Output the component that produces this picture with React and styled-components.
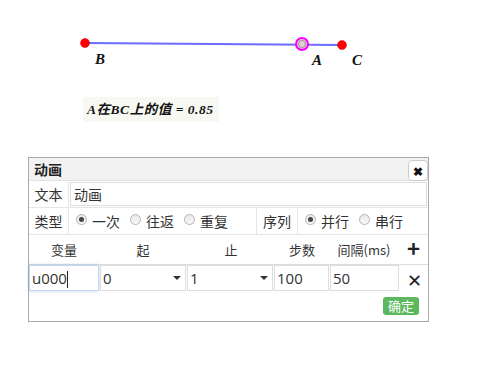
import React from "react";
import styled, { createGlobalStyle } from "styled-components";

const Global = createGlobalStyle`
  html, body { margin: 0; padding: 0; background: #fff; }
  body { font-family: "Noto Sans CJK SC", "Noto Sans", sans-serif; color: #333; }
`;

const Page = styled.div`
  width: 500px;
  height: 365px;
  overflow: hidden;
`;

const Canvas = styled.div`
  position: relative;
  height: 157px;
`;

const Drawing = styled.svg`
  display: block;
`;

const Dialog = styled.div`
  margin-left: 28px;
  width: 401px;
  height: 165px;
  box-sizing: border-box;
  border: 1px solid #aaa;
  display: flex;
  flex-direction: column;
`;

const Header = styled.div`
  height: 22px;
  background: #f2f2f2;
  border-bottom: 1px solid #e2e2e2;
  display: flex;
  align-items: center;
  justify-content: space-between;
  padding-left: 5px;
  font-size: 14px;
  font-weight: bold;
  color: #222;
`;

const CloseBtn = styled.div`
  width: 18px;
  height: 19px;
  margin-top: 3px;
  background: #fff;
  border: 1px solid #ccc;
  border-radius: 4px;
  display: flex;
  align-items: center;
  justify-content: center;
  font-size: 12px;
  color: #111;
`;

const Row = styled.div`
  display: flex;
  height: 26px;
  border-bottom: 1px solid #e6e6e6;
`;

const Label = styled.div`
  width: ${(p) => p.w || 40}px;
  box-sizing: border-box;
  border-right: 1px solid #e6e6e6;
  display: flex;
  align-items: center;
  justify-content: center;
  font-size: 14px;
  color: #333;
`;

const TextField = styled.div`
  flex: 1;
  margin: 1px 1px 0 1px;
  height: 24px;
  box-sizing: border-box;
  border: 1px solid #ddd;
  display: flex;
  align-items: center;
  padding-left: 3px;
  font-size: 14px;
  color: #333;
`;

const Radios = styled.div`
  width: ${(p) => p.w}px;
  box-sizing: border-box;
  border-right: ${(p) => (p.last ? "none" : "1px solid #e6e6e6")};
  display: flex;
  align-items: center;
  padding-left: 7px;
  gap: 10px;
`;

const Option = styled.label`
  display: flex;
  align-items: center;
  gap: 5px;
  font-size: 14px;
  color: #333;
`;

const Dot = styled.span`
  width: 11px;
  height: 11px;
  box-sizing: border-box;
  border-radius: 50%;
  border: 1px solid #b5b5b5;
  background: linear-gradient(#e8e8e8, #f8f8f8);
  display: flex;
  align-items: center;
  justify-content: center;
  margin-top: -3px;
  &::after {
    content: "";
    width: 5px;
    height: 5px;
    border-radius: 50%;
    background: ${(p) => (p.on ? "#444" : "transparent")};
  }
`;

const Cols = styled.div`
  display: flex;
  height: 29px;
  align-items: flex-end;
  border-bottom: 1px solid #ddd;
`;

const ColHead = styled.div`
  width: ${(p) => p.w}px;
  text-align: center;
  font-size: 13px;
  color: #333;
  padding-bottom: 5px;
`;

const Plus = styled.div`
  flex: 1;
  text-align: center;
  font-size: 22px;
  font-weight: bold;
  line-height: 22px;
  padding-bottom: 6px;
  color: #222;
`;

const Inputs = styled.div`
  display: flex;
  height: 27px;
`;

const Cell = styled.div`
  width: ${(p) => p.w}px;
  height: 26px;
  box-sizing: border-box;
  border: 1px solid ${(p) => (p.focus ? "#c6d8ee" : "#ddd")};
  box-shadow: ${(p) => (p.focus ? "0 0 3px rgba(102,160,230,.5)" : "none")};
  margin-right: 1px;
  display: flex;
  align-items: center;
  justify-content: space-between;
  padding: 0 3px 0 2px;
  font-family: "Open Sans", "Noto Sans", sans-serif;
  font-size: 15px;
  color: #333;
`;

const Caret = styled.span`
  display: inline-block;
  width: 1px;
  height: 17px;
  background: #222;
  vertical-align: middle;
`;

const Arrow = styled.span`
  width: 0;
  height: 0;
  border-left: 4px solid transparent;
  border-right: 4px solid transparent;
  border-top: 4px solid #333;
  margin-right: 1px;
`;

const Remove = styled.div`
  flex: 1;
  display: flex;
  align-items: center;
  justify-content: center;
  font-size: 18px;
  color: #222;
`;

const Footer = styled.div`
  flex: 1;
  display: flex;
  justify-content: flex-end;
  align-items: flex-start;
  padding: 5px 9px 0 0;
`;

const OkBtn = styled.div`
  background: #5cb85c;
  border-radius: 3px;
  color: #fff;
  font-size: 13px;
  padding: 0 5px;
  height: 18px;
  line-height: 18px;
`;

export default function App() {
  return (
    <Page>
      <Global />
      <Canvas>
        <Drawing width="500" height="157">
          <line x1="85" y1="43" x2="342" y2="45" stroke="#6b6bff" strokeWidth="2" />
          <circle cx="85" cy="43" r="4.5" fill="#f00" stroke="#c00" strokeWidth="0.5" />
          <circle cx="342" cy="45" r="4.5" fill="#f00" stroke="#c00" strokeWidth="0.5" />
          <circle cx="302" cy="44" r="6" fill="#dcc8cc" stroke="#f0f" strokeWidth="2" />
          <circle cx="302" cy="44" r="3.5" fill="#e8d0d8" stroke="#999" strokeWidth="1" />
          <g fontFamily="'Liberation Serif', serif" fontStyle="italic" fontWeight="bold" fontSize="15" fill="#111">
            <text x="95" y="64">B</text>
            <text x="312" y="65">A</text>
            <text x="352" y="65">C</text>
          </g>
          <rect x="83" y="97" width="136" height="25" fill="#f8f8f2" />
          <text
            x="87"
            y="114"
            fontFamily="'Liberation Serif', 'Noto Sans CJK SC', serif"
            fontStyle="italic"
            fontWeight="bold"
            fontSize="13.5"
            fill="#111"
            textLength="126"
          >
            A在BC上的值 = 0.85
          </text>
        </Drawing>
      </Canvas>
      <Dialog>
        <Header>
          动画
          <CloseBtn>✖</CloseBtn>
        </Header>
        <Row>
          <Label>文本</Label>
          <TextField>动画</TextField>
        </Row>
        <Row>
          <Label>类型</Label>
          <Radios w={188}>
            <Option><Dot on />一次</Option>
            <Option><Dot />往返</Option>
            <Option><Dot />重复</Option>
          </Radios>
          <Label w={41}>序列</Label>
          <Radios w={129} last>
            <Option><Dot on />并行</Option>
            <Option><Dot />串行</Option>
          </Radios>
        </Row>
        <Cols>
          <ColHead w={70}>变量</ColHead>
          <ColHead w={88}>起</ColHead>
          <ColHead w={88}>止</ColHead>
          <ColHead w={54}>步数</ColHead>
          <ColHead w={70}>间隔(ms)</ColHead>
          <Plus>+</Plus>
        </Cols>
        <Inputs>
          <Cell w={70} focus><span>u000<Caret /></span></Cell>
          <Cell w={86}><span>0</span><Arrow /></Cell>
          <Cell w={86}><span>1</span><Arrow /></Cell>
          <Cell w={55}><span>100</span></Cell>
          <Cell w={69}><span>50</span></Cell>
          <Remove>✕</Remove>
        </Inputs>
        <Footer>
          <OkBtn>确定</OkBtn>
        </Footer>
      </Dialog>
    </Page>
  );
}
